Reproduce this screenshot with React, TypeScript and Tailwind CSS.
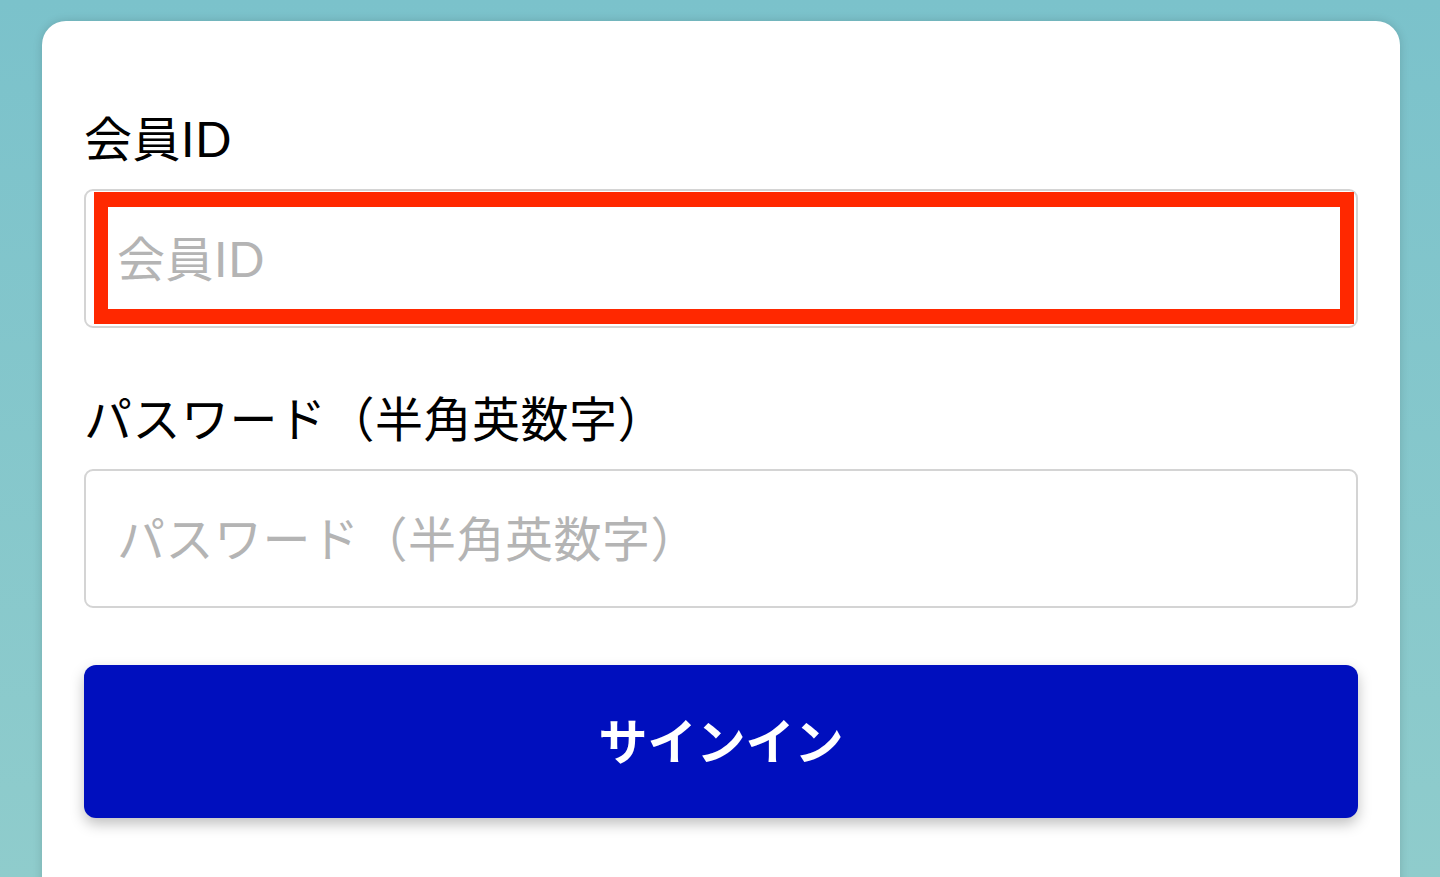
import React from "react";

const font = { fontFamily: '"Lato", "Noto Sans CJK JP", sans-serif' };

function Field({ label, placeholder, highlight, type = "text" }: { label: string; placeholder: string; highlight?: boolean; type?: string }) {
  return (
    <div className="flex flex-col">
      <label className="text-[48px] leading-[48px] text-black tracking-[0.5px]">{label}</label>
      <div className="relative mt-[26px]">
        <input
          type={type}
          placeholder={placeholder}
          className="block w-full h-[139px] rounded-[9px] border-2 border-[#d4d4d4] bg-white px-[31px] text-[48px] tracking-[0.5px] text-black placeholder:text-[#b4b4b4] outline-none"
          style={font}
        />
        {highlight && (
          <div className="pointer-events-none absolute left-[10px] top-[3px] right-[4px] bottom-[4px] border-x-[14px] border-y-[15px] border-[#ff2800]" />
        )}
      </div>
    </div>
  );
}

export default function App() {
  return (
    <div className="h-[877px] w-[1440px] overflow-hidden bg-gradient-to-b from-[#7bc2cb] to-[#8fcccc] pt-[21px] pl-[42px] pr-[40px]" style={font}>
      <div className="h-[900px] rounded-[24px] bg-white pt-[94px] px-[42px] shadow-[0_0_10px_rgba(0,0,0,0.15)]">
        <Field label="会員ID" placeholder="会員ID" highlight />
        <div className="mt-[67px]">
          <Field label="パスワード（半角英数字）" placeholder="パスワード（半角英数字）" type="password" />
        </div>
        <button className="mt-[57px] flex h-[153px] w-full items-center justify-center rounded-[12px] bg-[#000fbe] text-[49px] font-bold text-white shadow-[0_6px_14px_rgba(0,0,0,0.25)]" style={font}>
          サインイン
        </button>
      </div>
    </div>
  );
}
